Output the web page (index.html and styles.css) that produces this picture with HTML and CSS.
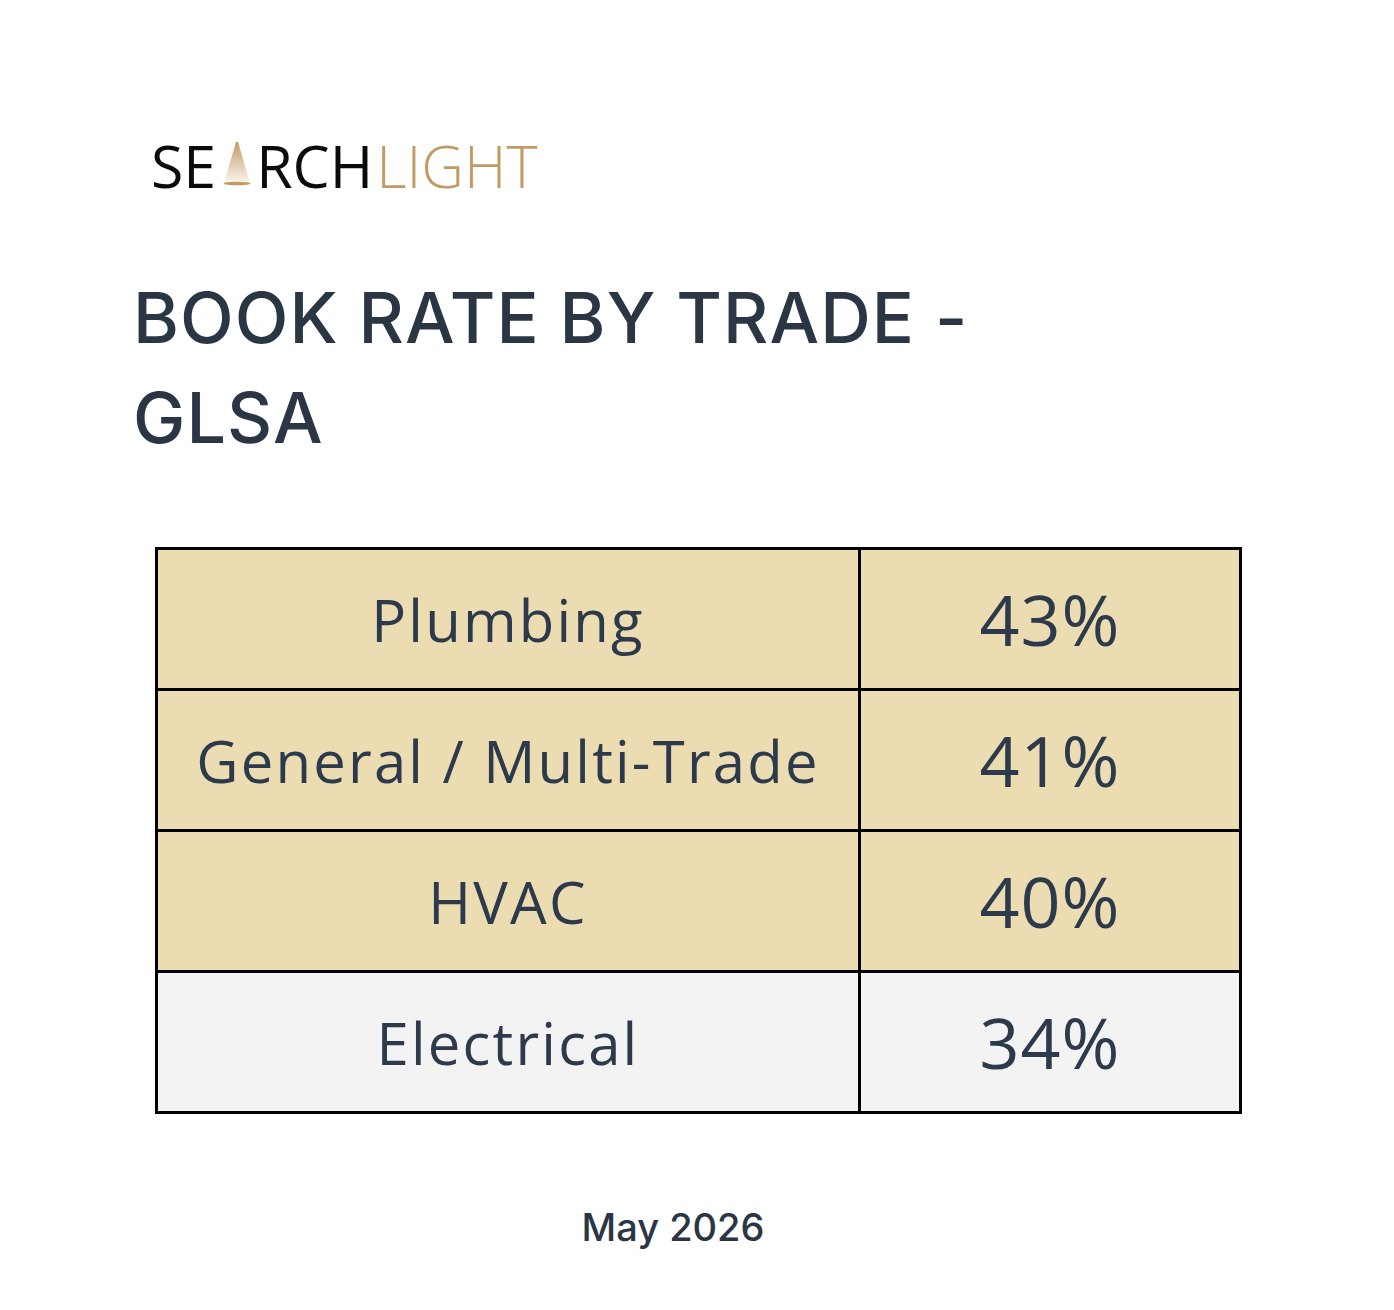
FILE: index.html
```html
<!DOCTYPE html>
<html lang="en">
<head>
<meta charset="utf-8">
<title>Book Rate by Trade - GLSA</title>
<link rel="stylesheet" href="styles.css">
</head>
<body>
<main class="page">
  <div class="logo">
    <span class="logo-dark">SE</span>
    <svg class="logo-a" width="30" height="46" viewBox="0 0 30 46" aria-hidden="true">
      <defs>
        <linearGradient id="beam" x1="0" y1="0" x2="0" y2="1">
          <stop offset="0" stop-color="#c39a62"/>
          <stop offset="1" stop-color="#fbf6ee"/>
        </linearGradient>
      </defs>
      <path d="M14 1 L16 1 L28 42 L2 42 Z" fill="url(#beam)"/>
      <ellipse cx="15" cy="42.5" rx="13.5" ry="1.8" fill="#c39a62"/>
    </svg>
    <span class="logo-dark">RCH</span><span class="logo-light">LIGHT</span>
  </div>

  <h1 class="title">BOOK RATE BY TRADE - GLSA</h1>

  <table class="rates">
    <tbody>
      <tr class="hl"><td class="trade">Plumbing</td><td class="pct">43%</td></tr>
      <tr class="hl"><td class="trade">General / Multi-Trade</td><td class="pct">41%</td></tr>
      <tr class="hl"><td class="trade">HVAC</td><td class="pct">40%</td></tr>
      <tr class="plain"><td class="trade">Electrical</td><td class="pct">34%</td></tr>
    </tbody>
  </table>

  <p class="date">May 2026</p>
</main>
</body>
</html>
```

FILE: styles.css
```css
html, body {
  margin: 0;
  padding: 0;
  background: #ffffff;
}

.page {
  padding: 139px 0 0 133px;
  width: 1261px;
  box-sizing: border-box;
  font-family: "Inter", "Liberation Sans", sans-serif;
  color: #2b3645;
}

.logo {
  display: flex;
  align-items: flex-end;
  margin-left: 18px;
  height: 52px;
  font-family: "Open Sans", "Noto Sans", sans-serif;
  font-size: 59px;
  line-height: 52px;
  letter-spacing: 0;
}

.logo-dark {
  color: #0b0b0b;
  font-weight: 500;
}

.logo-light {
  color: #c49a63;
  font-weight: 300;
  margin-left: 3px;
}

.logo-a {
  margin: 0 4px 4px 6px;
  flex: none;
}

.title {
  margin: 77px 0 0 0;
  max-width: 900px;
  font-size: 70px;
  font-weight: 500;
  line-height: 100px;
  letter-spacing: 1.1px;
  color: #2b3645;
}

.rates {
  margin: 79px 0 0 22px;
  width: 1087px;
  border-collapse: collapse;
  border: 3px solid #000;
  font-family: "Open Sans", "Noto Sans", sans-serif;
  color: #2d3a4c;
}

.rates td {
  border: 3px solid #000;
  height: 138px;
  padding: 0;
  text-align: center;
  vertical-align: middle;
  font-weight: 400;
}

.rates .trade {
  width: 700px;
  font-size: 58px;
  letter-spacing: 2.2px;
}

.rates .pct {
  font-size: 70px;
  font-weight: 400;
  letter-spacing: 1px;
}

.rates tr.hl td {
  background: #ecdcb1;
}

.rates tr.plain td {
  background: #f3f3f3;
}

.date {
  margin: 91px 0 0 0;
  width: 1080px;
  text-align: center;
  font-size: 38px;
  font-weight: 500;
  line-height: 44px;
  color: #2b3645;
}
```
